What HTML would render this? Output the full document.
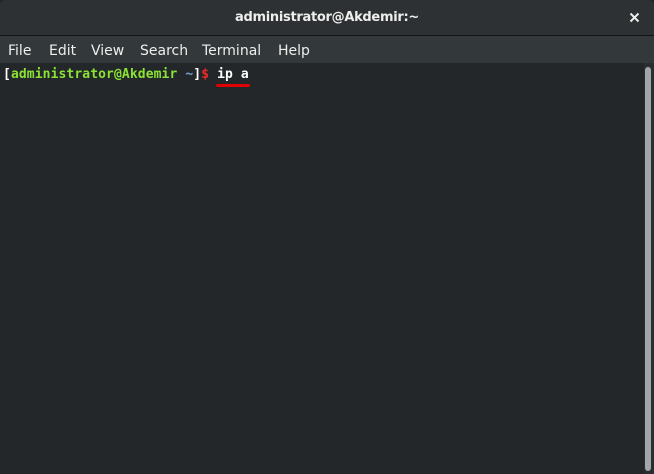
<!DOCTYPE html>
<html><head><style>
body{margin:0;width:654px;height:474px;overflow:hidden;background:#232729;font-family:"DejaVu Sans","Liberation Sans",sans-serif;}
.title{position:absolute;left:0;top:0;width:654px;height:35px;background:#2d3134;border-radius:6px 6px 0 0;color:#eeeeec;font-weight:bold;font-size:13px;letter-spacing:-0.3px;text-align:center;line-height:35px;}
.line{position:absolute;left:0;top:35px;width:654px;height:1px;background:#121415;}
.menu{position:absolute;left:0;top:36px;width:654px;height:27px;background:#33393b;color:#eeeeec;font-size:14px;line-height:30px;}
.menu span{position:absolute;top:0;}
.term{position:absolute;left:3px;top:66px;font-family:"DejaVu Sans Mono",monospace;font-weight:bold;font-size:13px;letter-spacing:0.1px;line-height:18px;color:#ffffff;white-space:pre;}
.g{color:#8ae234}.b{color:#729fcf}.r{color:#ef2929}
.ul{position:absolute;left:216px;top:84px;width:34px;height:3px;background:#e00000;border-radius:2px;}
.sb{position:absolute;left:644px;top:63px;width:10px;height:411px;background:#2a2e30;}
.th{position:absolute;left:645px;top:67px;width:6px;height:404px;background:#a3a6a6;border-radius:3px;}
</style></head><body>
<div class="title">administrator@Akdemir:~</div>
<svg style="position:absolute;left:629px;top:12px" width="11" height="11"><path d="M1.5 1.5L9.5 9.5M9.5 1.5L1.5 9.5" stroke="#eeeeec" stroke-width="2"/></svg>
<div class="line"></div>
<div class="menu"><span style="left:8px">File</span><span style="left:49px">Edit</span><span style="left:91px">View</span><span style="left:140px">Search</span><span style="left:202px">Terminal</span><span style="left:278px">Help</span></div>
<div class="term">[<span class="g">administrator@Akdemir</span> <span class="b">~</span>]<span class="r">$</span> ip a</div>
<div class="ul"></div>
<div class="sb"></div><div class="th"></div>
</body></html>
